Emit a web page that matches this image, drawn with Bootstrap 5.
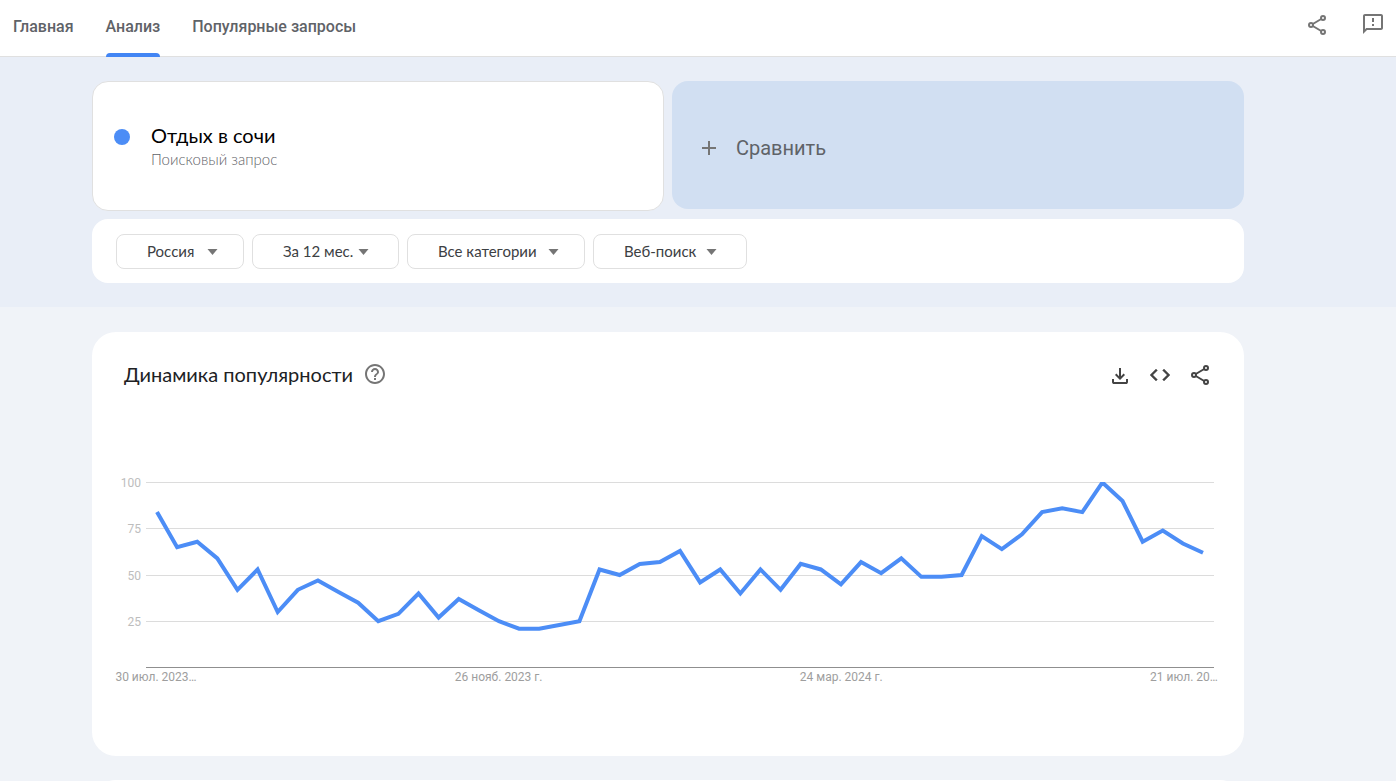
<!DOCTYPE html>
<html lang="ru">
<head>
<meta charset="utf-8">
<meta name="viewport" content="width=device-width, initial-scale=1">
<title>Отдых в сочи – Анализ</title>
<link href="https://cdn.jsdelivr.net/npm/bootstrap@5.3.0/dist/css/bootstrap.min.css" rel="stylesheet">
<style>
  body { background: #f0f3f8; font-family: Lato, "Open Sans", sans-serif; color: #202124; }
  svg { display: block; }
  .topbar { height: 57px; padding: 0 11px 0 13px; border-bottom: 1px solid #e0e0e0; }
  .tabs { gap: 32px; font: 500 16px/24px Roboto, sans-serif; }
  .tab-link { color: #5f6368; text-decoration: none; position: relative; padding: 15px 0 17px; }
  .tab-link.active::after { content: ""; position: absolute; left: 0; right: 0; bottom: -1px; height: 4px; background: #4285f4; border-radius: 4px 4px 0 0; }
  .top-actions { gap: 32px; padding-top: 12px; }
  .icon-btn { border: 0; padding: 0; background: none; color: #757575; }
  .icon-dark { color: #444; }
  .shell { padding-left: 92px; padding-right: 152px; }
  .hero { background: #e9eef7; padding-top: 24px; padding-bottom: 24px; }
  .term, .compare, .filters { border-radius: 16px; }
  .term { height: 130px; border: 1px solid #e0e0e0; padding: 41px 21px 0; gap: 21px; }
  .dot { width: 16px; height: 16px; border-radius: 50%; background: #4c8df6; margin-top: 6px; }
  .term-name { font-size: 20px; line-height: 24px; color: #000; }
  .term-kind { font-size: 15px; line-height: 24px; font-weight: 300; color: #5f6368; }
  .compare { height: 128px; border: 0; background: #d1dff2; color: #5f6368; padding: 6px 25px 0; gap: 15px; font: 400 20px/24px Roboto, sans-serif; }
  .filters { padding: 15px 24px 14px; }
  .filter-select { height: 35px; padding: 0 30px 2px; font-size: 15px; line-height: 24px; color: #3c4043; border: 1px solid #e0e0e0; border-radius: 8px;
    background-image: url("data:image/svg+xml,%3csvg xmlns='http://www.w3.org/2000/svg' viewBox='0 0 10 6'%3e%3cpath fill='%23757575' d='M0 0h10L5 6z'/%3e%3c/svg%3e"); background-size: 11px 6px; background-position: right 25px center; }
  .w-geo { width: 128px; }
  .w-time { width: 147px; background-position: right 29px center; }
  .w-cat { width: 178px; }
  .w-prop { width: 154px; background-position: right 29px center; }
  .panel { border-radius: 24px; }
  .trend { margin-top: 25px; padding-bottom: 70px; }
  .panel-head { height: 86px; padding: 0 32px; }
  .panel-name { gap: 10px; }
  .panel-title { font-size: 20px; line-height: 24px; padding-bottom: 2px; }
  .chart { margin-top: 64px; padding: 0 30px 0 20px; gap: 5px; }
  .axis-y, .axis-x { font: 400 12px/18px Roboto, sans-serif; }
  .axis-y { width: 29px; color: #bdbdbd; }
  .axis-y span { height: 1px; line-height: 2px; }
  .plot { height: 186px; min-width: 0; }
  .axis-x { padding: 0 16px 0 20px; color: #9e9e9e; }
  .axis-x span { width: 88px; text-align: center; white-space: nowrap; }
  .grid-line { stroke: #dcdcdc; }
  .base-line { stroke: #8f8f8f; }
  .series { fill: none; stroke: #4c8df6; stroke-width: 4; vector-effect: non-scaling-stroke; }
  .next { margin-top: 24px; min-height: 80px; }
</style>
</head>
<body>
<svg class="d-none" aria-hidden="true">
  <symbol id="share" viewBox="0 0 24 24"><g fill="none" stroke="currentColor" stroke-width="2"><circle cx="18" cy="5" r="2"/><circle cx="6" cy="12" r="2"/><circle cx="18" cy="19" r="2"/><path d="M7.8 11 16.2 6M7.8 13l8.4 5"/></g></symbol>
</svg>
<div class="d-flex flex-column vh-100 overflow-hidden">
  <header class="topbar bg-white d-flex justify-content-between flex-shrink-0">
    <nav class="tabs d-flex">
      <a class="tab-link" href="#">Главная</a>
      <a class="tab-link active" href="#" aria-current="page">Анализ</a>
      <a class="tab-link" href="#">Популярные запросы</a>
    </nav>
    <div class="top-actions d-flex align-items-start">
      <button class="icon-btn" aria-label="Поделиться"><svg width="24" height="25" viewBox="0 0 24 25"><use href="#share" y="1" width="24" height="24"/></svg></button>
      <button class="icon-btn" aria-label="Отправить отзыв"><svg width="24" height="24" viewBox="0 0 24 24" fill="currentColor"><path fill-rule="evenodd" d="M20 2H4c-1.1 0-2 .9-2 2v18l4-4h14c1.1 0 2-.9 2-2V4c0-1.1-.9-2-2-2zm0 14H5.2L4 17.2V4h16v12zM11 12h2v2h-2zM11 6h2v4h-2z"/></svg></button>
    </div>
  </header>

  <section class="hero shell flex-shrink-0">
    <div class="d-flex align-items-start gap-2 mb-2">
      <div class="term bg-white d-flex align-items-start flex-fill w-50">
        <span class="dot flex-shrink-0"></span>
        <div>
          <div class="term-name">Отдых в сочи</div>
          <div class="term-kind">Поисковый запрос</div>
        </div>
      </div>
      <button class="compare d-flex align-items-center flex-fill w-50">
        <svg width="24" height="24" viewBox="0 0 24 24" stroke="#757575" stroke-width="2"><path d="M5 12h14M12 5v14"/></svg>
        <span>Сравнить</span>
      </button>
    </div>
    <div class="filters bg-white d-flex flex-wrap gap-2">
      <select class="form-select filter-select w-geo" aria-label="Регион"><option>Россия</option></select>
      <select class="form-select filter-select w-time" aria-label="Период"><option>За 12 мес.</option></select>
      <select class="form-select filter-select w-cat" aria-label="Категория"><option>Все категории</option></select>
      <select class="form-select filter-select w-prop" aria-label="Тип поиска"><option>Веб-поиск</option></select>
    </div>
  </section>

  <main class="shell">
    <section class="panel trend bg-white">
      <div class="panel-head d-flex align-items-center justify-content-between">
        <div class="panel-name d-flex align-items-center">
          <h1 class="panel-title fw-normal mb-0">Динамика популярности</h1>
          <button class="icon-btn" aria-label="Справка"><svg width="24" height="24" viewBox="0 1 24 24" fill="currentColor"><path d="M11 18h2v-2h-2v2zm1-16C6.48 2 2 6.48 2 12s4.480 10 10 10 10-4.480 10-10S17.520 2 12 2zm0 18c-4.410 0-8-3.590-8-8s3.590-8 8-8 8 3.590 8 8-3.590 8-8 8zm0-14c-2.210 0-4 1.790-4 4h2c0-1.100.9-2 2-2s2 .9 2 2c0 2-3 1.750-3 5h2c0-2.250 3-2.500 3-5 0-2.210-1.790-4-4-4z"/></svg></button>
        </div>
        <div class="d-flex gap-3">
          <button class="icon-btn icon-dark" aria-label="Скачать"><svg width="24" height="24" viewBox="0 -1 24 24" fill="currentColor"><path d="M12 16l-5-5 1.4-1.45 2.6 2.6V4h2v8.15l2.6-2.6L17 11zM6 20q-.825 0-1.413-.588Q4 18.825 4 18v-3h2v3h12v-3h2v3q0 .825-.588 1.413Q18.825 20 18 20z"/></svg></button>
          <button class="icon-btn icon-dark" aria-label="Встроить"><svg width="24" height="24" viewBox="0 0 24 24" fill="currentColor" stroke="currentColor" stroke-width=".4"><path d="M9.4 16.6L4.8 12l4.6-4.6L8 6l-6 6 6 6zM14.6 16.6l4.6-4.6-4.6-4.6L16 6l6 6-6 6z"/></svg></button>
          <button class="icon-btn icon-dark" aria-label="Поделиться графиком"><svg width="24" height="24"><use href="#share"/></svg></button>
        </div>
      </div>
      <div class="chart d-flex">
        <div class="axis-y d-flex flex-column justify-content-between text-end flex-shrink-0">
          <span>100</span><span>75</span><span>50</span><span>25</span><span></span>
        </div>
        <svg class="plot flex-fill w-100" viewBox="0 0 1068 186" preserveAspectRatio="none" role="img" aria-label="Динамика популярности">
          <path class="grid-line" d="M0 .5H1068M0 46.5H1068M0 93.5H1068M0 139.5H1068"/>
          <path class="base-line" d="M0 185.5H1068"/>
          <polyline class="series" id="series"/>
        </svg>
      </div>
      <div class="axis-x d-flex justify-content-between">
        <span>30 июл. 2023…</span><span>26 нояб. 2023&nbsp;г.</span><span>24 мар. 2024&nbsp;г.</span><span>21 июл. 20…</span>
      </div>
    </section>
    <section class="panel next bg-white"></section>
  </main>
</div>
<script src="https://cdn.jsdelivr.net/npm/bootstrap@5.3.0/dist/js/bootstrap.bundle.min.js"></script>
<script>
  // Weekly interest values, 0–100
  const values = [84,65,68,59,42,53,30,42,47,41,35,25,29,40,27,37,31,25,21,21,23,25,53,50,56,57,63,46,53,40,53,42,56,53,45,57,51,59,49,49,50,71,64,72,84,86,84,100,90,68,74,67,62];
  const step = (1068 - 22) / (values.length - 1);
  document.getElementById('series').setAttribute('points',
    values.map((v, i) => (11 + i * step) + ',' + (0.5 + (100 - v) * 1.85)).join(' '));
</script>
</body>
</html>
